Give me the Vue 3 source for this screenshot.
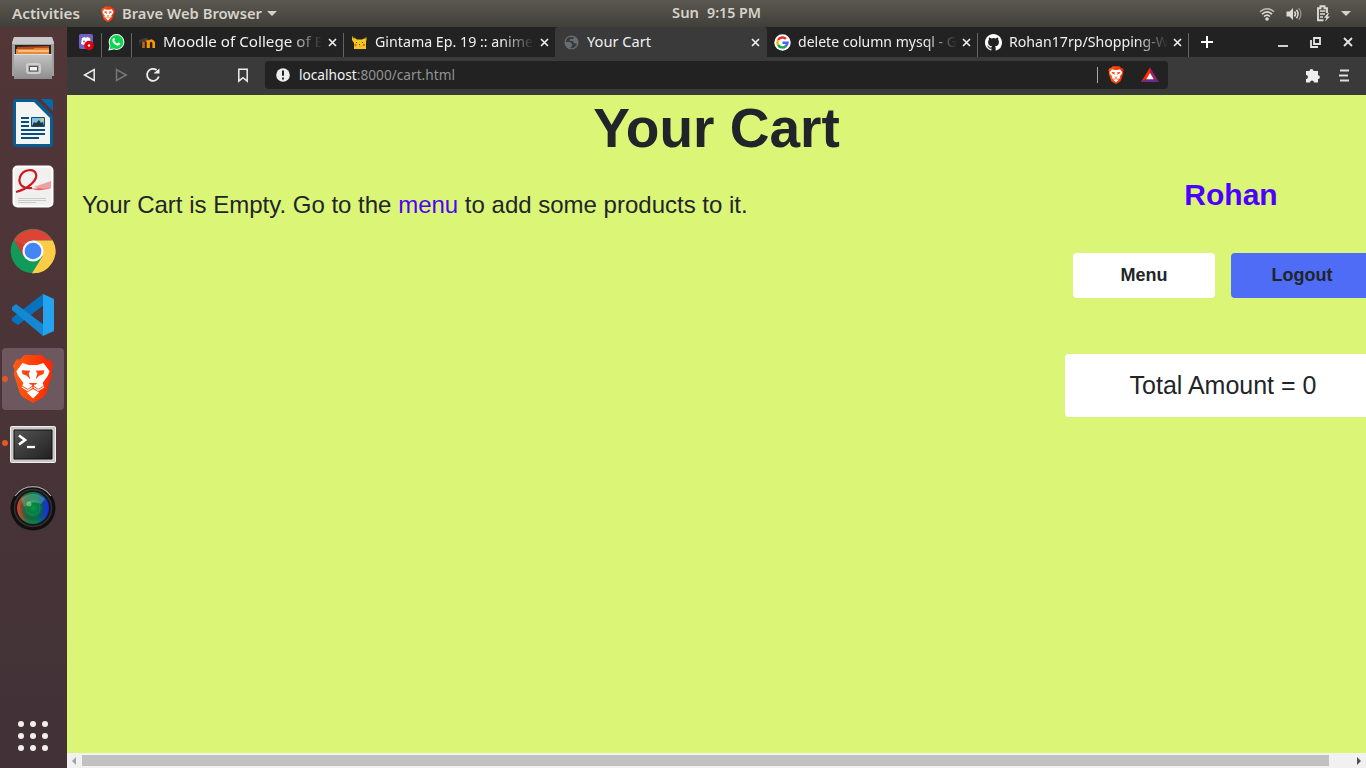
<script setup>
const tabs = [
  { id: 'moodle', title: 'Moodle of College of E', length: 160 },
  { id: 'anime', title: 'Gintama Ep. 19 :: anime', length: 158 },
  { id: 'cart', title: 'Your Cart', length: 64, active: true },
  { id: 'google', title: 'delete column mysql - G', length: 159 },
  { id: 'github', title: 'Rohan17rp/Shopping-W', length: 160 },
]
const dots = [0, 1, 2, 3, 4, 5, 6, 7, 8]
</script>

<template>
  <div class="desktop">
    <header class="panel">
      <svg class="activities" width="80" height="27"><text x="0" y="18.5" textLength="68" lengthAdjust="spacingAndGlyphs">Activities</text></svg>
      <svg class="lion" width="14" height="16" viewBox="0 0 48 54"><use href="#brave-lion" /></svg>
      <svg class="app-name" width="142" height="27"><text x="0" y="18.5" textLength="140" lengthAdjust="spacingAndGlyphs">Brave Web Browser</text></svg>
      <i class="caret"></i>
      <div class="clock">
        <svg width="90" height="27"><text x="0" y="18" textLength="27" lengthAdjust="spacingAndGlyphs">Sun</text><text x="35" y="18" textLength="54" lengthAdjust="spacingAndGlyphs">9:15 PM</text></svg>
      </div>
      <div class="status">
        <svg width="16" height="14" viewBox="0 0 16 14" fill="none" stroke="#dcdad5">
          <path d="M1 4.8Q8-1.3 15 4.8" stroke-width="1.4" opacity=".8" /><path d="M3 7.2Q8 2.6 13 7.2M5 9.5Q8 6.8 11 9.5" stroke-width="1.6" /><circle cx="8" cy="12" r="1.8" fill="#dcdad5" stroke="none" />
        </svg>
        <svg width="16" height="14" viewBox="0 0 16 14" fill="none" stroke="#dcdad5">
          <path d="M.5 4.500h3L7 1v12L3.500 9.500h-3z" fill="#dcdad5" stroke="none" /><path d="M8.500 4.500q2 2.500 0 5M10.500 2.700q3 4.300 0 8.600" stroke-width="1.5" /><path d="M12.800 1q4.200 6 0 12" stroke-width="1.300" opacity=".5" />
        </svg>
        <svg width="15" height="17" viewBox="0 0 15 17" fill="none" stroke="#dcdad5">
          <path d="M7.500 15.200H2v-12h2.500V1.300h4v1.900H11V8" stroke-width="1.900" /><path d="M4 6h5.500M4 9h5M4 12h3" stroke-width="1.500" /><path d="M12 8l-4 4.800h2.500L9 16.500l5-5h-2.500L13 8z" fill="#dcdad5" stroke="none" />
        </svg>
        <i class="caret"></i>
      </div>
    </header>

    <div class="workspace">
      <aside class="dock">
        <div class="slot">
          <svg width="46" height="48" viewBox="0 0 46 48">
            <defs>
              <linearGradient id="metal" x1="0" y1="0" x2="0" y2="1"><stop offset="0" stop-color="#c4c4c4" /><stop offset="1" stop-color="#8e8e8e" /></linearGradient>
            </defs>
            <path d="M4 2h38l2 5v34H2V7z" fill="#a0a0a0" /><path d="M4 2h38l2 7H2z" fill="#c9c9c9" />
            <path d="M5 10h36v10H5z" fill="#292521" /><path d="M7 12l32-1v8H7z" fill="#bb481b" /><path d="M6 14h17l2-1h14v6H6z" fill="#e88a38" /><path d="M8 16h31" stroke="#ffe3b0" stroke-width="1.200" />
            <path d="M4 19h38v25H4z" fill="url(#metal)" /><path d="M4 19.500h38" stroke="#ddd" />
            <rect x="17" y="29" width="13" height="9" rx="2" fill="#aaa" stroke="#cfcfcf" stroke-width="2" /><rect x="19.500" y="31.500" width="8" height="4.500" fill="#f3f3f3" stroke="#555" />
          </svg>
        </div>
        <div class="slot">
          <svg width="42" height="50" viewBox="0 0 42 50">
            <path d="M4 1h20l17 17v28a3 3 0 0 1-3 3H4a3 3 0 0 1-3-3V4a3 3 0 0 1 3-3z" fill="#0a5c94" /><path d="M4 4h18l16 16v26H4z" fill="#f4f4f2" />
            <path d="M29 1h9a3 3 0 0 1 3 3v9z" fill="#076aa7" />
            <path d="M9 20h8M9 24h8M9 28h8M9 32h24M9 36h24M9 40h18" stroke="#084e7f" stroke-width="2" /><path d="M19.500 19.500h13v9h-13z" fill="#7ec1e4" stroke="#084e7f" /><path d="M20 28l2-4 2 1 3-3 2 3 2-1 1 4z" fill="#27363d" /><circle cx="30.500" cy="21.500" r="1.500" fill="#edc84b" />
          </svg>
        </div>
        <div class="slot pdf">
          <svg width="42" height="43" viewBox="0 0 42 43">
            <rect x="1.500" y="1.500" width="39" height="40" rx="4" fill="#f0f0ef" stroke="#fff" stroke-width="2" /><path d="M6 33.500h28M6 35.500h28M6 37.500h18" stroke="#cacaca" />
            <path d="M15 22c8 4 17 0 24-6v7c-9 3-17 3-24-1z" fill="#e4686b" /><path d="M22 22l17-6v7c-6 1-11 1-17-1z" fill="#eea0a0" />
            <path d="M4 27C16 24 26 15 24 9 22 3 11 4 8 12c-2 7 2 12 12 11" fill="none" stroke="#cb1921" stroke-width="2.200" />
          </svg>
        </div>
        <div class="slot">
          <svg width="46" height="46" viewBox="0 0 46 46">
            <circle cx="23" cy="23" r="22.300" fill="#119b5a" /><path d="M4 12A22.300 22.300 0 0 1 42.500 12.500H23L13.500 28.500z" fill="#db4437" /><path d="M42.800 12.500H23L32.500 28.500 22 45.300A22.300 22.300 0 0 0 42.800 12.500z" fill="#ffcd45" /><path d="M4 12l9.500 16.500V17z" fill="#b93c31" opacity=".6" /><circle cx="23" cy="23" r="10.500" fill="#f5f5f5" /><circle cx="23" cy="23" r="8.300" fill="#4285f4" />
          </svg>
        </div>
        <div class="slot">
          <svg width="44" height="44" viewBox="0 0 44 44">
            <path d="M32 1v12L7 32 1 28v-3z" fill="#0873bd" /><path d="M5 11L1 14v3l31 26V31z" fill="#1488d1" /><path d="M32 1l11 5v32l-11 5z" fill="#24a4ef" /><path d="M32 13v18L20 22z" fill="#4c343b" />
          </svg>
        </div>
        <div class="slot running active">
          <svg width="42" height="50" viewBox="0 0 48 54" preserveAspectRatio="none">
            <defs><linearGradient id="flame"><stop offset="0" stop-color="#ff5d10" /><stop offset="1" stop-color="#ff2500" /></linearGradient></defs>
            <g id="brave-lion">
              <path d="M14 1h20l5 5h4l4 7-2 5 1 4-7 21q-1 3-4 5l-11 6-11-6q-3-2-4-5L2 22l1-4-2-5 4-7h4z" fill="url(#flame)" />
              <path d="M12 10l7 2h10l7-2 7 9-2 5-6 8 2 5-7 4-6-4-6 4-7-4 2-5-6-8-2-5z" fill="#fff" />
              <path d="M11 18l10 .5-2 3 2 6.500-4-4-5-2zM37 18l-10 .5 2 3-2 6.500 4-4 5-2zM19 32h10l-2.500 2H25v3h-2v-3h-1.500z" fill="#fb4311" />
              <path d="M11 35l7 4 6-4 6 4 7-4" fill="none" stroke="#fb4311" stroke-width="1" /><path d="M24 38.500l7 4-7 6.500-7-6.500z" fill="#fff" />
            </g>
          </svg>
        </div>
        <div class="slot running terminal">
          <svg width="46" height="38" viewBox="0 0 46 38">
            <defs><linearGradient id="screen" x1="0" y1="0" x2="1" y2="1"><stop offset="0" stop-color="#555" /><stop offset="1" stop-color="#202020" /></linearGradient></defs>
            <rect x=".5" y=".5" width="45" height="36" rx="1" fill="#c8c8c8" stroke="#eee" /><path d="M4 4h38v29H4z" fill="url(#screen)" stroke="#111" /><path d="M9 9.500l6 4.500-6 4.500" fill="none" stroke="#fff" stroke-width="2.700" /><path d="M17 21h8" stroke="#fff" stroke-width="2.300" />
          </svg>
        </div>
        <div class="slot camera">
          <svg width="46" height="46" viewBox="0 0 46 46">
            <defs><linearGradient id="lens"><stop offset="0" stop-color="#e43d29" /><stop offset=".32" stop-color="#26743f" /><stop offset=".62" stop-color="#087d55" /><stop offset="1" stop-color="#1724f1" /></linearGradient><radialGradient id="glass"><stop offset="0" stop-color="#00a33e" stop-opacity=".9" /><stop offset=".65" stop-color="#086744" stop-opacity=".5" /><stop offset="1" stop-color="#071c28" stop-opacity=".1" /></radialGradient></defs>
            <circle cx="23" cy="23" r="22.500" fill="#101010" /><path d="M5 11A22 22 0 0 1 41 11" stroke="#aaa" stroke-width="1.200" fill="none" /><circle cx="23" cy="23" r="18.500" fill="#161616" stroke="#333" stroke-width="1.500" /><circle cx="23" cy="23" r="16" fill="url(#lens)" /><circle cx="23" cy="23" r="13" fill="url(#glass)" /><circle cx="23" cy="23" r="7" fill="none" stroke="#1db66a" opacity=".4" /><path d="M11 14q12-10 24 0l-4 5q-9-4-17 3z" fill="#a0efd0" opacity=".28" /><circle cx="19" cy="19" r="2.500" fill="#a4dc82" opacity=".6" />
          </svg>
        </div>
        <div class="launcher"><i v-for="d in dots" :key="d"></i></div>
      </aside>

      <main class="browser">
        <nav class="tabs">
          <div class="pin discord">
            <svg width="16" height="17" viewBox="0 0 16 17"><rect x="0" y="0" width="14" height="15" rx="2" fill="#7460c5" /><path d="M3 4l3-1 1 1 1-1 3 1 1 6-3 1-1-1H6l-1 1-3-1z" fill="#fff" /><circle cx="5" cy="7.500" r="1" fill="#7460c5" /><circle cx="10" cy="11.500" r="4.700" fill="#e2000b" /><circle cx="10" cy="11.500" r="1.200" fill="#fff" /></svg>
          </div>
          <div class="pin whatsapp">
            <svg width="17" height="17" viewBox="0 0 17 17"><circle cx="8.500" cy="8" r="7.900" fill="#fff" /><path d="M.3 16.500l1.300-5 4 4z" fill="#fff" /><circle cx="8.500" cy="8" r="6.900" fill="#0bd451" /><path d="M1.600 15.300l1-4 3 3z" fill="#0bd451" /><path d="M5 4.500q1.500-1.500 2 .8L6.300 6.800q1 2 3 2.800l1.200-1q2.500.6 1.500 2-1 1.400-3 .8-3.200-1-4.500-4Q4 5.500 5 4.500z" fill="#fff" /></svg>
          </div>
          <div v-for="tab in tabs" :key="tab.id" class="tab" :class="[tab.id, { current: tab.active }]">
            <span class="favicon">
              <svg v-if="tab.id === 'moodle'" width="17" height="17" viewBox="0 0 17 17" fill="none"><path d="M4.500 14V7.500" stroke="#b86c17" stroke-width="2.600" /><path d="M9 14V8.500q0-2.500-2.500-2" stroke="#e88a0e" stroke-width="2.600" /><path d="M9.500 14V8.500q2.700-4 5.200 0V14" stroke="#ff9800" stroke-width="2.600" /><path d="M0 6.500l7-2.500 2 1.500-4 1.500-4 .5v4" stroke="#4b4036" fill="#4b4036" stroke-width=".6" /></svg>
              <svg v-else-if="tab.id === 'anime'" width="16" height="16" viewBox="0 0 16 16"><path d="M0 2l5 3.500h5L15 3l-1 5v7H2V9L0 6z" fill="#f3c81f" /><path d="M0 2l3.500 2L1 4.500M15 3l-3 1 2.500 1" fill="#6b4c15" /><path d="M4 8h1v1H4zM10 8h1v1h-1zM7 10h1v1H7z" fill="#58421b" /><circle cx="3.500" cy="11" r="1.200" fill="#e76224" /><circle cx="12" cy="11" r="1.200" fill="#e76224" /><path d="M6 11.500h4l-2 2z" fill="#fb9a55" /></svg>
              <svg v-else-if="tab.id === 'cart'" width="15" height="15" viewBox="0 0 15 15"><circle cx="7.500" cy="7.500" r="7" fill="#686c73" /><path d="M7 2Q2 2 2 7h4l2 2v2l-2 2q5 1 7-4l-3-1-1-2H6V4h3l1-2z" fill="#3b3b3b" /></svg>
              <svg v-else-if="tab.id === 'google'" width="17" height="17" viewBox="0 0 17 17" fill="none" stroke-width="2.500"><circle cx="8.500" cy="8.500" r="8.200" fill="#fff" stroke="none" /><path d="M12 4.900A5 5 0 0 0 4.100 6" stroke="#ea2d24" /><path d="M4.100 6a5 5 0 0 0 0 5" stroke="#fbbc05" /><path d="M4.100 11a5 5 0 0 0 7.600 1.200" stroke="#16a94c" /><path d="M8.500 8.700h5q-.3 2.300-1.800 3.500" stroke="#5060f4" /></svg>
              <svg v-else width="17" height="17" viewBox="0 0 16 16" fill="#fff"><path d="M8 0C3.580 0 0 3.580 0 8c0 3.540 2.290 6.530 5.470 7.590.4.070.55-.17.55-.38v-1.490c-2.010.37-2.530-.49-2.690-.94-.09-.23-.48-.94-.82-1.130-.28-.15-.68-.52-.01-.53.63-.01 1.080.58 1.230.82.72 1.210 1.870.87 2.330.66.07-.52.28-.87.51-1.070-1.780-.2-3.640-.89-3.640-3.950 0-.87.31-1.590.82-2.150-.08-.2-.36-1.020.08-2.120 0 0 .67-.21 2.200.82a7.600 7.600 0 0 1 4 0c1.530-1.040 2.200-.82 2.200-.82.44 1.100.16 1.920.08 2.120.51.56.82 1.270.82 2.150 0 3.070-1.870 3.750-3.650 3.950.29.250.54.730.54 1.480v2.200c0 .21.15.46.55.38A8.010 8.010 0 0 0 16 8c0-4.420-3.580-8-8-8z" /></svg>
            </span>
            <svg class="title" width="161" height="30"><text x="0" y="20" :textLength="tab.length" lengthAdjust="spacingAndGlyphs">{{ tab.title }}</text></svg>
            <svg class="close" width="9" height="9" viewBox="0 0 9 9"><path d="M1 1l7 7M8 1L1 8" /></svg>
          </div>
          <svg class="plus" width="12" height="12" viewBox="0 0 12 12"><path d="M6 0v12M0 6h12" /></svg>
          <div class="window-buttons">
            <svg width="10" height="12" viewBox="0 0 10 12"><path d="M0 10h10" /></svg>
            <svg width="11" height="11" viewBox="0 0 11 11"><path d="M4 1h6v6H4zM1 3v7h7" /></svg>
            <svg width="10" height="10" viewBox="0 0 10 10"><path d="M1 1l8 8M9 1L1 9" /></svg>
          </div>
        </nav>
        <div class="toolbar">
          <svg class="back" width="13" height="14" viewBox="0 0 13 14"><path d="M11.200 1.500v11L1.500 7z" /></svg>
          <svg class="forward" width="13" height="14" viewBox="0 0 13 14"><path d="M1.500 1.500v11L11.200 7z" /></svg>
          <svg class="reload" width="16" height="16" viewBox="0 0 16 16"><path d="M11.600 3A6 6 0 1 0 13.800 9.500" /><path d="M9 6.500V6l5.500-4.500v5z" fill="#eee" stroke="none" /></svg>
          <svg class="bookmark" width="12" height="15" viewBox="0 0 12 15"><path d="M1.800 1.200h8.400v12L6 9.700l-4.200 3.500z" /></svg>
          <div class="address">
            <svg width="14" height="14" viewBox="0 0 14 14"><circle cx="7" cy="7" r="6.800" fill="#eee" /><path d="M7 2.500v5.300M7 9.500v2" stroke="#222" stroke-width="2" /></svg>
            <svg class="url" width="160" height="28"><text x="0" y="19" textLength="156" lengthAdjust="spacingAndGlyphs">localhost<tspan fill="#929292">:8000/cart.html</tspan></text></svg>
            <i class="divider"></i>
            <svg class="shield" width="16" height="18" viewBox="0 0 48 54"><use href="#brave-lion" /></svg>
            <svg width="18" height="16" viewBox="0 0 19 16"><path d="M9.500 0L0 15.500 9.500 10z" fill="#ff2b00" /><path d="M9.500 0L19 15.500 9.500 10z" fill="#9e1f63" /><path d="M0 15.500h19L9.500 10z" fill="#662d91" /><path d="M9.500 6l4 6.500h-8z" fill="#fff" /></svg>
          </div>
          <svg class="puzzle" width="15" height="15" viewBox="0 0 15 15"><path d="M1 3h3.500a2 2 0 1 1 4 0H13v4.200a1.900 1.900 0 1 1 0 3.800v3.500H9a2 2 0 1 0-4 0H1V11a2 2 0 1 0 0-4z" /></svg>
          <svg class="menu-icon" width="10" height="13" viewBox="0 0 10 13"><path d="M1 1.500h9M0 6.500h9M1 11.500h9" /></svg>
        </div>

        <section class="page">
          <h1>Your Cart</h1>
          <div class="columns">
            <p class="empty">Your Cart is Empty. Go to the <a>menu</a> to add some products to it.</p>
            <div class="side">
              <h2>Rohan</h2>
              <div class="actions"><button>Menu</button><button class="logout">Logout</button></div>
              <div class="total">Total Amount = 0</div>
            </div>
          </div>
        </section>
        <div class="scrollbar"><i class="left"></i><i class="thumb"></i><i class="right"></i></div>
      </main>
    </div>
  </div>
</template>

<style>
html, body { margin: 0; overflow: hidden; }
</style>

<style scoped>
* { box-sizing: border-box; }
svg { display: block; flex: none; }
.desktop { width: 1366px; height: 768px; overflow: hidden; display: flex; flex-direction: column; font-family: "Noto Sans", sans-serif; }
.panel { height: 27px; flex: none; display: flex; align-items: center; padding-left: 12px; background: linear-gradient(#5b584f, #403f3a); }
.panel text { font: 600 14px "Noto Sans", sans-serif; fill: #d6d2ca; }
.lion { margin-left: 9px; }
.app-name { margin-left: 7px; }
.caret { border: 5px solid transparent; border-top-color: #d5d2cb; border-bottom: 0; margin-left: 3px; }
.clock { margin-left: 395px; }
.status { display: flex; align-items: center; margin-left: 497px; gap: 11px; }
.status svg:nth-child(3) { margin-left: 3px; }
.status .caret { margin-left: -1px; }
.workspace { display: flex; flex: 1; min-height: 0; }
.dock { width: 67px; flex: none; background: linear-gradient(#523638, #413237); display: flex; flex-direction: column; align-items: center; padding-right: 1px; }
.slot { width: 62px; height: 62px; margin: 1px 0; border-radius: 4px; display: flex; align-items: center; justify-content: center; flex: none; position: relative; }
.pdf { padding-bottom: 2px; }
.terminal { padding-top: 4px; }
.camera { padding-top: 1px; }
.active { background: #6c585e; }
.active svg { padding-bottom: 1px; }
.running::before { content: ""; position: absolute; left: 0; top: 28px; width: 6px; height: 6px; border-radius: 50%; background: #e95420; }
.launcher { margin: auto 0 17px; display: grid; grid-template-columns: repeat(3, 6px); gap: 6px; }
.launcher i { width: 6px; height: 6px; border-radius: 50%; background: #f2f0ef; }
.browser { flex: 1; min-width: 0; display: flex; flex-direction: column; background: #3a3a3a; }
.tabs { height: 30px; background: #222; display: flex; flex: none; }
.pin, .tab { border-right: 1px solid; border-image: linear-gradient(transparent 23%, #646464 23%) 1; display: flex; flex: none; }
.discord { width: 35px; padding: 7px 0 0 12px; }
.whatsapp { width: 30px; padding: 7px 0 0 6px; }
.tab { width: 212px; align-items: center; padding-left: 7px; overflow: hidden; }
.tab.anime { width: 211px; border: 0; padding-left: 8px; }
.tab.cart { width: 212px; border: 0; background: #3a3a3a; padding-left: 9px; border-radius: 3px 3px 0 0; }
.tab.google { width: 211px; }
.tab.github { width: 211px; }
.favicon { width: 24px; flex: none; }
.tab.anime .favicon, .tab.cart .favicon { width: 23px; }
.title { overflow: hidden; mask-image: linear-gradient(90deg, #000 127px, transparent 159px); }
.title text { font: 14.5px "Noto Sans", sans-serif; fill: #f0f0f0; }
.current .title { mask-image: none; }
.close { margin-left: 4px; fill: none; stroke: #f2f2f2; stroke-width: 1.6; }
.cart .close, .google .close, .github .close { margin-left: 3px; }
.plus { margin: 9px 0 0 12px; fill: none; stroke: #fff; stroke-width: 2; }
.window-buttons { margin-left: auto; padding-right: 13px; display: flex; align-items: center; gap: 22px; }
.window-buttons svg { fill: none; stroke: #e5e5e5; stroke-width: 1.8; }
.toolbar { height: 38px; flex: none; background: #3a3a3a; display: flex; align-items: center; padding: 0 17px 2px 16px; fill: none; stroke: #eee; }
.back, .forward, .reload, .bookmark { stroke-width: 1.5; }
.forward { margin-left: 19px; stroke: #777; }
.reload { margin-left: 17px; stroke-width: 1.8; }
.bookmark { margin-left: 76px; }
.address { width: 903px; height: 28px; margin-left: 16px; border-radius: 4px; background: #222; display: flex; align-items: center; padding: 0 9px 0 11px; stroke: none; }
.url { margin-left: 9px; fill: #f4f4f4; }
.url text { font: 14px "Noto Sans", sans-serif; }
.divider { width: 1px; height: 16px; background: #aaa; margin-left: auto; }
.shield { margin: 0 17px 0 10px; }
.puzzle { margin-left: auto; fill: #eee; stroke: none; }
.menu-icon { margin-left: 19px; stroke: #ddd; stroke-width: 1.8; }
.page { flex: 1; overflow: hidden; background: #dbf577; color: #212529; font-family: "Liberation Sans", Arial, sans-serif; }
h1 { margin: 0; height: 66px; font-size: 55px; line-height: 66px; text-align: center; }
.columns { display: flex; }
.empty { width: 998px; flex: none; margin: 0; padding: 26px 0 0 15px; font-size: 24px; line-height: 36px; }
a { color: #4c00ff; }
.side { width: 332px; flex: none; }
h2 { margin: 16px 0 0; font-size: 30px; line-height: 36px; color: #4c00ff; text-align: center; }
.actions { display: flex; gap: 16px; margin: 40px 0 0 8px; }
button { width: 142px; height: 45px; border: 0; border-radius: 4px; background: #fff; color: #212529; font: bold 18px/27px "Liberation Sans", Arial, sans-serif; padding: 0 0 1px; }
.logout { background: #4f6cf7; }
.total { width: 316px; height: 63px; margin-top: 56px; border-radius: 4px; background: #fff; font-size: 25px; line-height: 63px; text-align: center; }
.scrollbar { height: 15px; flex: none; background: #f1f1f1; display: flex; align-items: center; padding: 0 5px; }
.left { border: 4px solid transparent; border-left: 0; border-right-color: #a3a3a3; }
.thumb { width: 1247px; height: 11px; background: #c1c1c1; margin-left: 6px; }
.right { border: 4px solid transparent; border-right: 0; border-left-color: #505050; margin-left: auto; }
</style>
